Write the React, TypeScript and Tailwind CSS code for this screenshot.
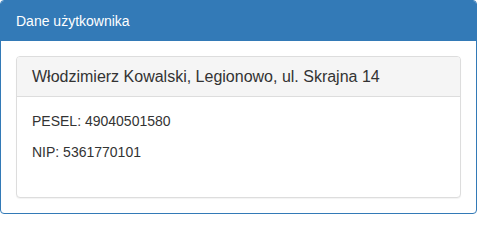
export default function App() {
  return (
    <div className="w-[477px] bg-white font-['Liberation_Sans',Arial,sans-serif] text-[14px] leading-5 text-[#333]">
      <div className="rounded border border-[#337ab7] bg-white">
        <div className="rounded-t-[3px] border-b border-[#337ab7] bg-[#337ab7] px-[15px] pt-[10px] pb-[9px] text-white">
          Dane użytkownika
        </div>
        <div className="p-[15px]">
          <div className="rounded border border-[#ddd] bg-white shadow-[0_1px_1px_rgba(0,0,0,0.05)]">
            <div className="rounded-t-[3px] border-b border-[#ddd] bg-[#f5f5f5] px-[15px] pt-[10px] pb-[9px] text-[16px] leading-5">
              Włodzimierz Kowalski, Legionowo, ul. Skrajna 14
            </div>
            <div className="flex flex-col gap-[11px] px-[15px] pt-[14px] pb-[35px]">
              <p>PESEL: 49040501580</p>
              <p>NIP: 5361770101</p>
            </div>
          </div>
        </div>
      </div>
    </div>
  );
}
